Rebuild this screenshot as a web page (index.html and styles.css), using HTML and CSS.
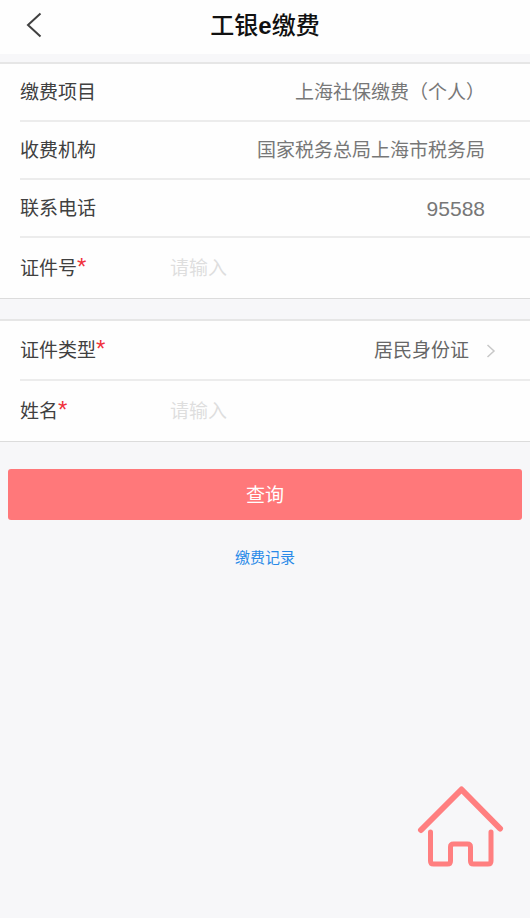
FILE: index.html
```html
<!DOCTYPE html>
<html lang="zh-CN">
<head>
<meta charset="utf-8">
<meta name="viewport" content="width=device-width, initial-scale=1">
<title>工银e缴费</title>
<link rel="stylesheet" href="styles.css">
</head>
<body>
<header class="topbar">
  <button class="back" type="button" aria-label="返回">
    <svg width="16" height="26" viewBox="0 0 16 26" fill="none" stroke="currentColor" stroke-width="2"><path d="M14.500 1.500L2 13L14.500 24.500"/></svg>
  </button>
  <h1 class="title">工银<span class="brand">e</span>缴费</h1>
</header>
<main>
  <form>
    <div class="group">
      <div class="row"><span class="label">缴费项目</span><span class="value">上海社保缴费（个人）</span></div>
      <div class="row"><span class="label">收费机构</span><span class="value">国家税务总局上海市税务局</span></div>
      <div class="row"><span class="label">联系电话</span><span class="value number">95588</span></div>
      <div class="row field">
        <label class="label" for="id-number">证件号<span class="required">*</span></label>
        <input class="input" id="id-number" type="text" placeholder="请输入">
      </div>
    </div>
    <div class="group">
      <div class="row field">
        <label class="label" for="id-type">证件类型<span class="required">*</span></label>
        <select class="select" id="id-type"><option>居民身份证</option></select>
        <svg class="chevron" width="10" height="14" viewBox="0 0 10 14" fill="none" stroke="currentColor" stroke-width="1.500"><path d="M1.500 1L8 7L1.500 13"/></svg>
      </div>
      <div class="row field">
        <label class="label" for="name">姓名<span class="required">*</span></label>
        <input class="input" id="name" type="text" placeholder="请输入">
      </div>
    </div>
    <button class="submit" type="button">查询</button>
  </form>
  <a class="history" href="#history">缴费记录</a>
</main>
<a class="home" href="#home" aria-label="首页">
  <svg width="88" height="84" viewBox="0 0 88 84" fill="none" stroke="currentColor" stroke-linecap="round" stroke-linejoin="round">
    <path stroke-width="6" d="M4 46L44.500 5.500L83 44.500"/>
    <path stroke-width="5" d="M13.500 48V77Q13.500 80 16.500 80H30.500Q33.500 80 33.500 77V63Q33.500 60 36.500 60H50.500Q53.500 60 53.500 63V77Q53.500 80 56.500 80H71Q74 80 74 77V48"/>
  </svg>
</a>
</body>
</html>
```

FILE: styles.css
```css
* {
  box-sizing: border-box;
}

body {
  margin: 0;
  min-height: 100vh;
  background: #f7f7f9;
  color: #404040;
  font: 19px/28px "Liberation Sans", "Noto Sans CJK SC", sans-serif;
}

.topbar {
  display: grid;
  grid-template-columns: 60px 1fr 60px;
  align-items: center;
  height: 54px;
  padding-bottom: 4px;
  margin-bottom: 8px;
  background: #fefefe;
}

.back {
  display: flex;
  justify-content: flex-end;
  padding: 0 18px 0 0;
  border: 0;
  background: none;
  color: #404040;
}

.title {
  margin: 0;
  padding-top: 2px;
  color: #111;
  font-size: 24px;
  font-weight: 500;
  text-align: center;
}

.brand {
  font-weight: 700;
}

.group {
  padding-left: 20px;
  margin-bottom: 20px;
  border-top: 2px solid #e6e6e6;
  border-bottom: 1px solid #dcdcdc;
  background: #fefefe;
}

.row {
  display: flex;
  align-items: center;
  height: 58px;
  padding-top: 2px;
  padding-right: 45px;
  border-bottom: 2px solid #ececec;
}

.field {
  height: 60px;
  padding-right: 34px;
}

.row:last-child {
  border-bottom: 0;
}

.label {
  flex: 0 0 150px;
}

.required {
  color: #f0323c;
  font-size: 24px;
  line-height: 20px;
}

.value {
  flex: 1;
  color: #777;
  text-align: right;
}

.number {
  font-size: 21px;
}

.input,
.select {
  flex: 1;
  min-width: 0;
  height: 40px;
  padding: 0;
  border: 0;
  outline: 0;
  background: none;
  font: inherit;
}

.input::placeholder {
  color: #dedede;
}

.select {
  appearance: none;
  color: #666;
  text-align-last: right;
}

.chevron {
  margin-left: 17px;
  color: #c8c8c8;
}

.submit {
  display: block;
  width: calc(100% - 16px);
  height: 51px;
  margin: 27px 8px 0;
  padding: 2px 0 0;
  border: 0;
  border-radius: 3px;
  background: #ff787a;
  color: #fff;
  font: inherit;
}

.history {
  display: block;
  width: max-content;
  margin: 24px auto 0;
  color: #2a8ae8;
  font-size: 15px;
  text-decoration: none;
}

.home {
  position: fixed;
  right: 25px;
  bottom: 50px;
  color: #ff7f80;
  line-height: 0;
}
```
